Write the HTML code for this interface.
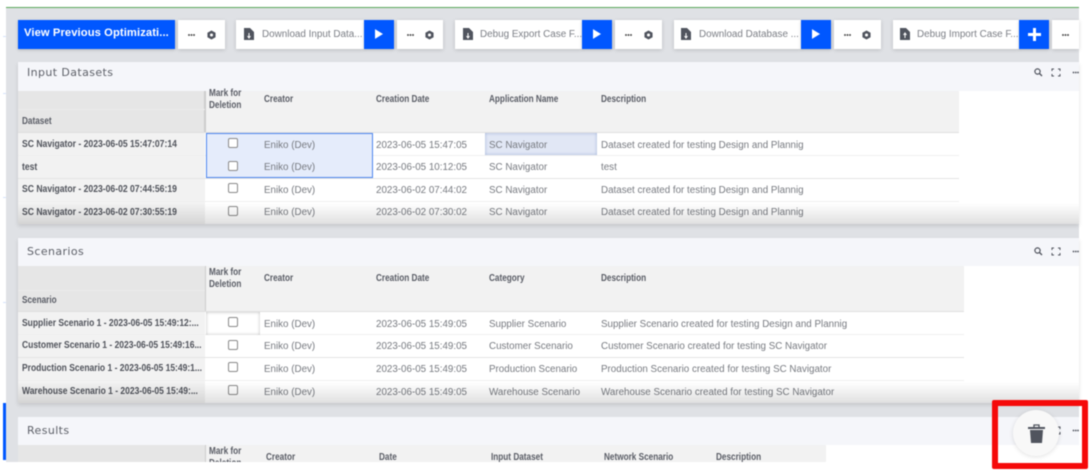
<!DOCTYPE html>
<html><head><meta charset="utf-8"><style>
html,body{margin:0;padding:0;background:#fff;width:1091px;height:470px;overflow:hidden}
*{box-sizing:border-box}
#r{position:absolute;left:0;top:0;width:1091px;height:470px;overflow:hidden;font-family:"Liberation Sans",sans-serif;filter:blur(.45px)}
.a{position:absolute}
.w{position:absolute;background:#fff;top:20px;height:29px;box-shadow:0 1px 4px rgba(0,0,0,.16)}
.b{position:absolute;background:#0057ff;top:20px;height:29px;width:30px;box-shadow:0 1px 3px rgba(0,0,0,.2)}
.l{position:absolute;top:28px;font-size:9.9px;line-height:14px;color:#7b7e85;white-space:nowrap}
.h{position:absolute;margin-top:1px;font-size:10px;line-height:12px;font-weight:bold;color:#5a5d66;transform:scaleX(.82);transform-origin:0 50%;white-space:nowrap}
.k{position:absolute;margin-top:1px;font-size:10px;line-height:12px;font-weight:bold;color:#50535b;transform:scaleX(.86);transform-origin:0 50%;white-space:nowrap}
.c{position:absolute;margin-top:1px;font-size:9.8px;line-height:12px;color:#777a80;white-space:nowrap}
.ti{position:absolute;margin-top:1px;left:27px;font-family:"DejaVu Sans",sans-serif;font-size:11px;line-height:14px;color:#5d6068;letter-spacing:.4px}
.cb{position:absolute;left:228px;width:10px;height:10px;border:1px solid #8a8a8a;border-radius:2px;background:#fff}
.d{position:absolute;width:7px;height:2px;background:radial-gradient(circle at 1px 1px,#555 1px,transparent 1px) 0 0/2.5px 2px}
svg{position:absolute}
</style></head><body><div id="r">
<div class="a" style="left:6px;top:8px;width:1073px;height:454px;background:#dfe1e5"></div>
<div class="a" style="left:6px;top:7px;width:1073px;height:1px;background:#5aa85a"></div>
<div class="a" style="left:3px;top:36px;width:3px;height:1px;background:#d5e2fa"></div>
<div class="a" style="left:3px;top:93px;width:3px;height:1px;background:#d5e2fa"></div>
<div class="a" style="left:3px;top:197px;width:3px;height:1px;background:#d5e2fa"></div>
<div class="a" style="left:3px;top:302px;width:3px;height:1px;background:#d5e2fa"></div>
<div class="a" style="left:3px;top:403px;width:3px;height:57px;background:#0057ff"></div>

<div class="b" style="left:18px;width:157px"></div>
<div class="a" style="left:24px;top:26px;font-size:11.2px;line-height:15px;font-weight:bold;color:#fff;white-space:nowrap;letter-spacing:.1px">View Previous Optimizati...</div>
<div class="w" style="left:178px;width:47px"></div>
<div class="w" style="left:236px;width:128px"></div><div class="b" style="left:364px"></div><div class="w" style="left:397px;width:46px"></div>
<div class="w" style="left:455px;width:127px"></div><div class="b" style="left:582px"></div><div class="w" style="left:615px;width:47px"></div>
<div class="w" style="left:674px;width:127px"></div><div class="b" style="left:801px"></div><div class="w" style="left:834px;width:47px"></div>
<div class="w" style="left:893px;width:126px"></div><div class="b" style="left:1019px"></div><div class="w" style="left:1052px;width:27px"></div>

<div class="l" style="left:262px">Download Input Data...</div>
<div class="l" style="left:480px">Debug Export Case F...</div>
<div class="l" style="left:699px">Download Database ...</div>
<div class="l" style="left:917px">Debug Import Case F...</div>

<svg style="left:244px;top:28px" width="10" height="12" viewBox="0 0 10 12"><path d="M0 0H6L10 4V12H0Z" fill="#50545e"/><path d="M5 5V9M3.5 8L5 10L6.5 8" stroke="#fff" fill="none"/></svg>
<svg style="left:463px;top:28px" width="10" height="12" viewBox="0 0 10 12"><path d="M0 0H6L10 4V12H0Z" fill="#50545e"/><path d="M5 5V9M3.5 8L5 10L6.5 8" stroke="#fff" fill="none"/></svg>
<svg style="left:681px;top:28px" width="10" height="12" viewBox="0 0 10 12"><path d="M0 0H6L10 4V12H0Z" fill="#50545e"/><path d="M5 5V9M3.5 8L5 10L6.5 8" stroke="#fff" fill="none"/></svg>
<svg style="left:900px;top:28px" width="10" height="12" viewBox="0 0 10 12"><path d="M0 0H6L10 4V12H0Z" fill="#50545e"/><path d="M5 10V6M3.5 7L5 5L6.5 7" stroke="#fff" fill="none"/></svg>

<svg style="left:375px;top:29px" width="8" height="10" viewBox="0 0 9 11"><path d="M0 0L9 5.5L0 11Z" fill="#fff"/></svg>
<svg style="left:593px;top:29px" width="8" height="10" viewBox="0 0 9 11"><path d="M0 0L9 5.5L0 11Z" fill="#fff"/></svg>
<svg style="left:812px;top:29px" width="8" height="10" viewBox="0 0 9 11"><path d="M0 0L9 5.5L0 11Z" fill="#fff"/></svg>
<svg style="left:1028px;top:28px" width="13" height="13" viewBox="0 0 13 13"><path d="M6.5 0V13M0 6.5H13" stroke="#fff" stroke-width="3"/></svg>

<div class="d" style="left:188px;top:34px"></div>
<div class="d" style="left:407px;top:34px"></div>
<div class="d" style="left:625px;top:34px"></div>
<div class="d" style="left:844px;top:34px"></div>
<div class="d" style="left:1062px;top:34px"></div>
<svg style="left:207px;top:30px" width="9" height="10" viewBox="0 0 10 10"><path d="M5 0L9.5 2.5V7.5L5 10L.5 7.5V2.5Z" fill="#50545e"/><circle cx="5" cy="5" r="1.7" fill="#fff"/></svg>
<svg style="left:425px;top:30px" width="9" height="10" viewBox="0 0 10 10"><path d="M5 0L9.5 2.5V7.5L5 10L.5 7.5V2.5Z" fill="#50545e"/><circle cx="5" cy="5" r="1.7" fill="#fff"/></svg>
<svg style="left:644px;top:30px" width="9" height="10" viewBox="0 0 10 10"><path d="M5 0L9.5 2.5V7.5L5 10L.5 7.5V2.5Z" fill="#50545e"/><circle cx="5" cy="5" r="1.7" fill="#fff"/></svg>
<svg style="left:862px;top:30px" width="9" height="10" viewBox="0 0 10 10"><path d="M5 0L9.5 2.5V7.5L5 10L.5 7.5V2.5Z" fill="#50545e"/><circle cx="5" cy="5" r="1.7" fill="#fff"/></svg>

<!-- Panel 1 -->
<div class="a" style="left:18px;top:62px;width:1061px;height:162px;background:#fff;box-shadow:0 2px 4px rgba(0,0,0,.12)"></div>
<div class="a" style="left:18px;top:62px;width:1061px;height:29px;background:#f5f6fa"></div>
<div class="ti" style="top:65px">Input Datasets</div>
<svg style="left:1034px;top:68px" width="45" height="9" viewBox="0 0 45 9"><circle cx="3.5" cy="3.5" r="2.6" fill="none" stroke="#50545e" stroke-width="1.2"/><path d="M5.5 5.5L8 8" stroke="#50545e" stroke-width="1.3"/><path d="M18 3V1H20M24 1H26V3M18 6V8H20M24 8H26V6" fill="none" stroke="#50545e"/><circle cx="39.5" cy="4.5" r=".9" fill="#50545e"/><circle cx="41.8" cy="4.5" r=".9" fill="#50545e"/><circle cx="44" cy="4.5" r=".9" fill="#50545e"/></svg>
<div class="a" style="left:205px;top:91px;width:754px;height:42px;background:#f2f2f2"></div>
<div class="a" style="left:18px;top:91px;width:187px;height:42px;background:#e6e6e6;border-right:1px solid #ccc"></div>
<div class="a" style="left:205px;top:91px;width:1px;height:42px;background:#ccc"></div>
<div class="a" style="left:18px;top:109px;width:187px;height:1px;background:#ececec"></div>
<div class="h" style="left:209px;top:87px">Mark for<br>Deletion</div>
<div class="h" style="left:264px;top:93px">Creator</div>
<div class="h" style="left:376px;top:93px">Creation Date</div>
<div class="h" style="left:489px;top:93px">Application Name</div>
<div class="h" style="left:601px;top:93px">Description</div>
<div class="h" style="left:22px;top:115px">Dataset</div>
<div class="a" style="left:18px;top:133px;width:187px;height:91px;background:#f2f2f2"></div>
<div class="a" style="left:18px;top:155px;width:941px;height:1px;background:#efefef"></div>
<div class="a" style="left:18px;top:178px;width:941px;height:1px;background:#e4e4e4"></div>
<div class="a" style="left:18px;top:201px;width:941px;height:1px;background:#efefef"></div>
<div class="a" style="left:18px;top:132px;width:941px;height:1px;background:#e0e0e0"></div>
<div class="a" style="left:206px;top:133px;width:167px;height:45px;background:#e5ecfb;border:1px solid #4d86ee"></div>
<div class="a" style="left:485px;top:133px;width:112px;height:22px;background:#e1e7f5;box-shadow:inset 0 0 3px #9fb0d6"></div>
<div class="cb" style="top:138px"></div><div class="cb" style="top:161px"></div><div class="cb" style="top:183px"></div><div class="cb" style="top:206px"></div>
<div class="k" style="left:22px;top:138px">SC Navigator - 2023-06-05 15:47:07:14</div>
<div class="k" style="left:22px;top:161px">test</div>
<div class="k" style="left:22px;top:183px">SC Navigator - 2023-06-02 07:44:56:19</div>
<div class="k" style="left:22px;top:206px">SC Navigator - 2023-06-02 07:30:55:19</div>
<div class="c" style="left:264px;top:139px">Eniko (Dev)</div><div class="c" style="left:376px;top:139px">2023-06-05 15:47:05</div><div class="c" style="left:489px;top:139px">SC Navigator</div><div class="c" style="left:601px;top:139px">Dataset created for testing Design and Plannig</div>
<div class="c" style="left:264px;top:161px">Eniko (Dev)</div><div class="c" style="left:376px;top:161px">2023-06-05 10:12:05</div><div class="c" style="left:489px;top:161px">SC Navigator</div><div class="c" style="left:601px;top:161px">test</div>
<div class="c" style="left:264px;top:184px">Eniko (Dev)</div><div class="c" style="left:376px;top:184px">2023-06-02 07:44:02</div><div class="c" style="left:489px;top:184px">SC Navigator</div><div class="c" style="left:601px;top:184px">Dataset created for testing Design and Plannig</div>
<div class="c" style="left:264px;top:206px">Eniko (Dev)</div><div class="c" style="left:376px;top:206px">2023-06-02 07:30:02</div><div class="c" style="left:489px;top:206px">SC Navigator</div><div class="c" style="left:601px;top:206px">Dataset created for testing Design and Plannig</div>
<div class="a" style="left:18px;top:203px;width:1061px;height:21px;background:linear-gradient(rgba(0,0,0,0),rgba(0,0,0,.12))"></div>

<!-- Panel 2 -->
<div class="a" style="left:18px;top:238px;width:1061px;height:165px;background:#fff;box-shadow:0 2px 4px rgba(0,0,0,.12)"></div>
<div class="a" style="left:18px;top:238px;width:1061px;height:28px;background:#f5f6fa"></div>
<div class="ti" style="top:244px">Scenarios</div>
<svg style="left:1034px;top:247px" width="45" height="9" viewBox="0 0 45 9"><circle cx="3.5" cy="3.5" r="2.6" fill="none" stroke="#50545e" stroke-width="1.2"/><path d="M5.5 5.5L8 8" stroke="#50545e" stroke-width="1.3"/><path d="M18 3V1H20M24 1H26V3M18 6V8H20M24 8H26V6" fill="none" stroke="#50545e"/><circle cx="39.5" cy="4.5" r=".9" fill="#50545e"/><circle cx="41.8" cy="4.5" r=".9" fill="#50545e"/><circle cx="44" cy="4.5" r=".9" fill="#50545e"/></svg>
<div class="a" style="left:205px;top:266px;width:759px;height:46px;background:#f2f2f2"></div>
<div class="a" style="left:18px;top:266px;width:188px;height:46px;background:#e6e6e6;border-right:1px solid #ccc"></div>
<div class="a" style="left:18px;top:290px;width:187px;height:1px;background:#ececec"></div>
<div class="h" style="left:209px;top:266px">Mark for<br>Deletion</div>
<div class="h" style="left:264px;top:272px">Creator</div>
<div class="h" style="left:376px;top:272px">Creation Date</div>
<div class="h" style="left:489px;top:272px">Category</div>
<div class="h" style="left:601px;top:272px">Description</div>
<div class="h" style="left:22px;top:294px">Scenario</div>
<div class="a" style="left:18px;top:312px;width:187px;height:91px;background:#f2f2f2"></div>
<div class="a" style="left:18px;top:311px;width:946px;height:1px;background:#e0e0e0"></div>
<div class="a" style="left:18px;top:334px;width:946px;height:1px;background:#efefef"></div>
<div class="a" style="left:18px;top:357px;width:946px;height:1px;background:#e4e4e4"></div>
<div class="a" style="left:18px;top:380px;width:946px;height:1px;background:#efefef"></div>
<div class="a" style="left:206px;top:312px;width:54px;height:23px;background:#fff;box-shadow:inset 0 0 3px #bbb"></div>
<div class="cb" style="top:317px"></div><div class="cb" style="top:340px"></div><div class="cb" style="top:362px"></div><div class="cb" style="top:385px"></div>
<div class="k" style="left:22px;top:317px;transform:scaleX(.85)">Supplier Scenario 1 - 2023-06-05 15:49:12:...</div>
<div class="k" style="left:22px;top:339px;transform:scaleX(.85)">Customer Scenario 1 - 2023-06-05 15:49:16...</div>
<div class="k" style="left:22px;top:362px;transform:scaleX(.85)">Production Scenario 1 - 2023-06-05 15:49:1...</div>
<div class="k" style="left:22px;top:385px;transform:scaleX(.85)">Warehouse Scenario 1 - 2023-06-05 15:49:...</div>
<div class="c" style="left:264px;top:318px">Eniko (Dev)</div><div class="c" style="left:376px;top:318px">2023-06-05 15:49:05</div><div class="c" style="left:489px;top:318px">Supplier Scenario</div><div class="c" style="left:601px;top:318px">Supplier Scenario created for testing Design and Plannig</div>
<div class="c" style="left:264px;top:340px">Eniko (Dev)</div><div class="c" style="left:376px;top:340px">2023-06-05 15:49:05</div><div class="c" style="left:489px;top:340px">Customer Scenario</div><div class="c" style="left:601px;top:340px">Customer Scenario created for testing SC Navigator</div>
<div class="c" style="left:264px;top:363px">Eniko (Dev)</div><div class="c" style="left:376px;top:363px">2023-06-05 15:49:05</div><div class="c" style="left:489px;top:363px">Production Scenario</div><div class="c" style="left:601px;top:363px">Production Scenario created for testing SC Navigator</div>
<div class="c" style="left:264px;top:386px">Eniko (Dev)</div><div class="c" style="left:376px;top:386px">2023-06-05 15:49:05</div><div class="c" style="left:489px;top:386px">Warehouse Scenario</div><div class="c" style="left:601px;top:386px">Warehouse Scenario created for testing SC Navigator</div>
<div class="a" style="left:18px;top:382px;width:1061px;height:21px;background:linear-gradient(rgba(0,0,0,0),rgba(0,0,0,.12))"></div>

<!-- Panel 3 -->
<div class="a" style="left:18px;top:417px;width:1061px;height:45px;background:#fff"></div>
<div class="a" style="left:18px;top:417px;width:1061px;height:28px;background:#f5f6fa"></div>
<div class="ti" style="top:423px">Results</div>
<svg style="left:1034px;top:426px" width="45" height="9" viewBox="0 0 45 9"><path d="M18 3V1H20M24 1H26V3M18 6V8H20M24 8H26V6" fill="none" stroke="#50545e"/><circle cx="39.5" cy="4.5" r=".9" fill="#50545e"/><circle cx="41.8" cy="4.5" r=".9" fill="#50545e"/><circle cx="44" cy="4.5" r=".9" fill="#50545e"/></svg>
<div class="a" style="left:205px;top:445px;width:621px;height:17px;background:#f2f2f2"></div>
<div class="a" style="left:18px;top:445px;width:188px;height:17px;background:#e6e6e6;border-right:1px solid #ccc"></div>
<div class="h" style="left:209px;top:445px">Mark for<br>Deletion</div>
<div class="h" style="left:266px;top:451px">Creator</div>
<div class="h" style="left:379px;top:451px">Date</div>
<div class="h" style="left:491px;top:451px">Input Dataset</div>
<div class="h" style="left:604px;top:451px">Network Scenario</div>
<div class="h" style="left:716px;top:451px">Description</div>
<div class="a" style="left:0;top:462px;width:1091px;height:8px;background:#fff"></div>

<!-- Delete overlay -->
<div class="a" style="left:1013px;top:410px;width:46px;height:46px;border-radius:50%;background:#f8f8f8;box-shadow:0 1px 5px rgba(0,0,0,.12)"></div>
<svg style="left:1028px;top:424px" width="17" height="19" viewBox="0 0 17 19"><path d="M6 3V1H11V3" fill="none" stroke="#50545e" stroke-width="1.3"/><path d="M0 3H17V5H0Z" fill="#50545e"/><path d="M2 6H15L14 19H3Z" fill="#50545e"/></svg>
<div class="a" style="left:992px;top:400px;width:96px;height:69px;border:6px solid #f50a0a;border-radius:2px"></div>
</div></body></html>
